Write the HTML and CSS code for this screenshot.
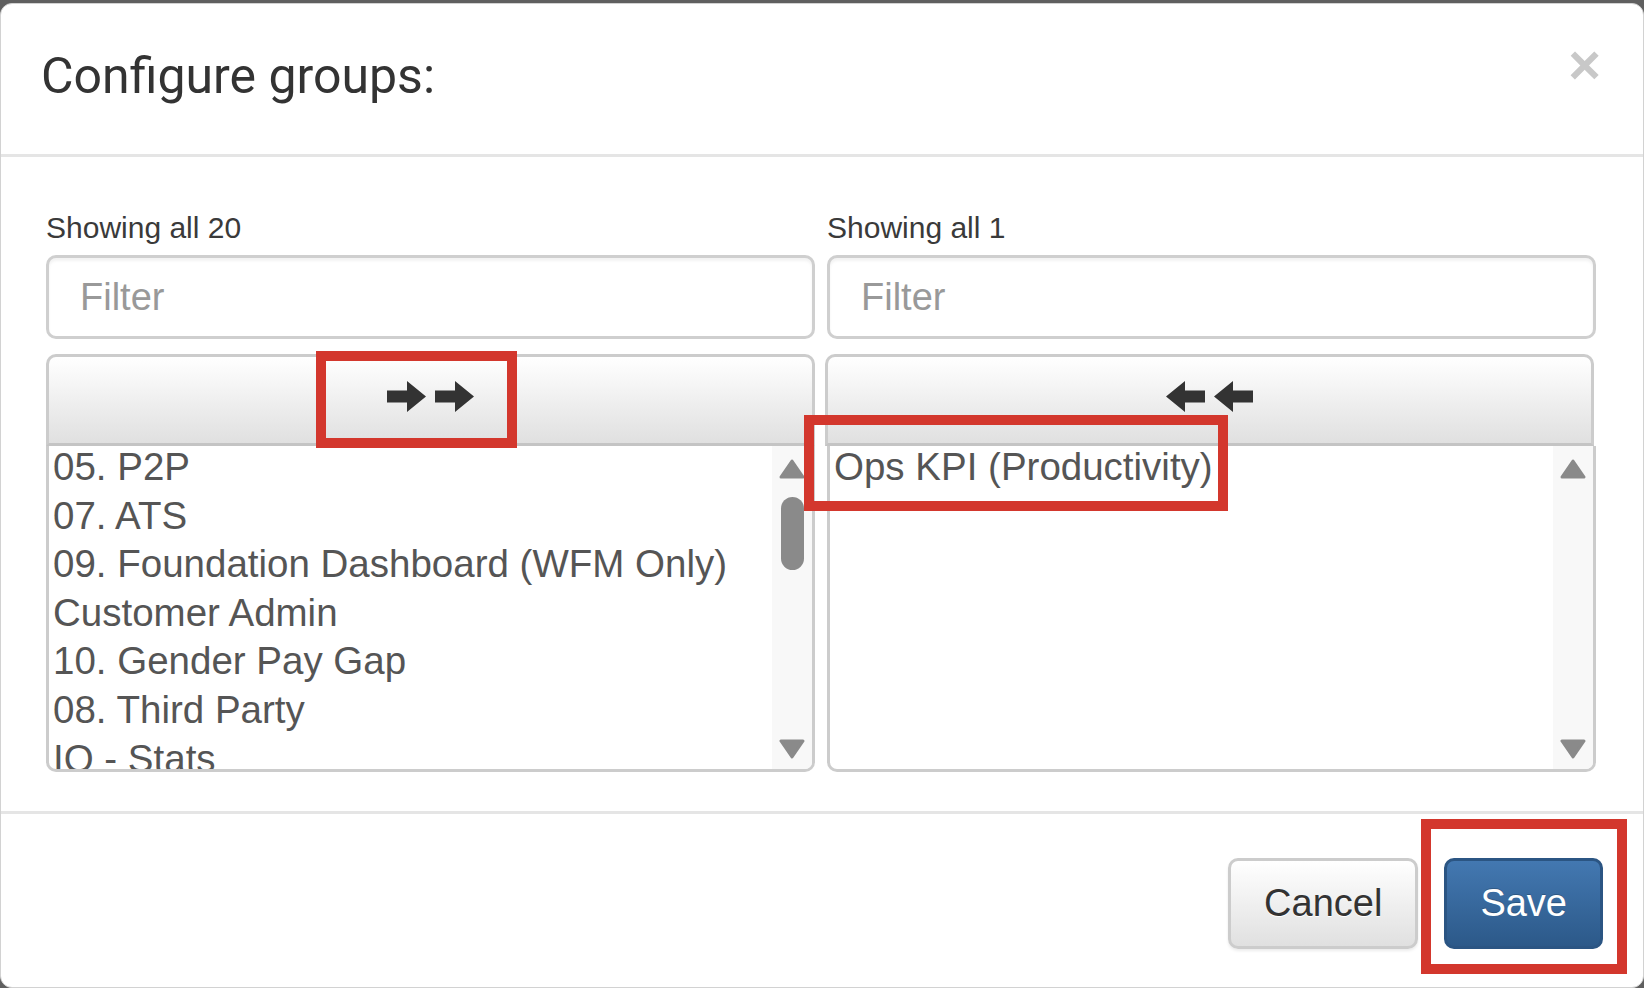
FILE: index.html
```html
<!DOCTYPE html>
<html lang="en">
<head>
<meta charset="utf-8">
<title>Configure groups</title>
<link rel="stylesheet" href="styles.css">
</head>
<body>
<div class="modal">
  <div class="modal-header">
    <h4 class="modal-title">Configure groups:</h4>
    <button class="close" type="button" aria-label="Close">&times;</button>
  </div>

  <div class="modal-body">
    <div class="duallist">
      <!-- available groups -->
      <div class="box">
        <span class="info">Showing all 20</span>
        <input class="filter" type="text" placeholder="Filter">
        <button class="move-all" type="button" title="Move all">
          <svg class="arrow-icon" width="87" height="31" viewBox="0 0 87 31">
            <path d="M0 9.5H20V0L39 15.5L20 31V21.5H0Z"/>
            <path d="M48 9.5H68V0L87 15.5L68 31V21.5H48Z"/>
          </svg>
        </button>
        <div class="list">
          <ul class="options">
            <li>05. P2P</li>
            <li>07. ATS</li>
            <li>09. Foundation Dashboard (WFM Only)</li>
            <li>Customer Admin</li>
            <li>10. Gender Pay Gap</li>
            <li>08. Third Party</li>
            <li>IQ - Stats</li>
          </ul>
          <div class="scrollbar">
            <svg class="sb-arrow" width="26" height="20" viewBox="0 0 26 20"><path d="M13 2L24 18H2Z"/></svg>
            <span class="thumb"></span>
            <span class="track"></span>
            <svg class="sb-arrow" width="26" height="20" viewBox="0 0 26 20"><path d="M2 2H24L13 18Z"/></svg>
          </div>
        </div>
      </div>

      <!-- selected groups -->
      <div class="box">
        <span class="info">Showing all 1</span>
        <input class="filter" type="text" placeholder="Filter">
        <button class="move-all shift" type="button" title="Remove all">
          <svg class="arrow-icon" width="87" height="31" viewBox="0 0 87 31">
            <path d="M39 9.5H19V0L0 15.5L19 31V21.5H39Z"/>
            <path d="M87 9.5H67V0L48 15.5L67 31V21.5H87Z"/>
          </svg>
        </button>
        <div class="list">
          <ul class="options">
            <li>Ops KPI (Productivity)</li>
          </ul>
          <div class="scrollbar">
            <svg class="sb-arrow" width="26" height="20" viewBox="0 0 26 20"><path d="M13 2L24 18H2Z"/></svg>
            <span class="track"></span>
            <svg class="sb-arrow" width="26" height="20" viewBox="0 0 26 20"><path d="M2 2H24L13 18Z"/></svg>
          </div>
        </div>
      </div>
    </div>
  </div>

  <div class="modal-footer">
    <button class="btn btn-default" type="button">Cancel</button>
    <button class="btn btn-primary" type="button">Save</button>
  </div>

  <!-- highlight frames -->
  <span class="mark mark-move"></span>
  <span class="mark mark-item"></span>
  <span class="mark mark-save"></span>
</div>
</body>
</html>
```

FILE: styles.css
```css
* {
  box-sizing: border-box;
}

html, body {
  margin: 0;
  height: 100%;
}

body {
  background: #5f5f5f;
  font-family: "Liberation Sans", Arial, sans-serif;
  color: #333;
  overflow: hidden;
}

.modal {
  position: relative;
  margin-top: 3px;
  height: 985px;
  background: #fff;
  border: 1px solid #d2d2d2;
  border-radius: 12px;
  overflow: hidden;
}

/* header */
.modal-header {
  display: flex;
  justify-content: space-between;
  align-items: flex-start;
  padding: 37px 42px 43px 40px;
  border-bottom: 3px solid #e5e5e5;
}

.modal-title {
  margin: 0;
  font-family: Roboto, "Liberation Sans", sans-serif;
  font-weight: 400;
  font-size: 50px;
  line-height: 70px;
  color: #333;
}

.close {
  margin-top: -4px;
  padding: 0;
  border: 0;
  background: none;
  font-family: "Liberation Sans", Arial, sans-serif;
  font-weight: 700;
  font-size: 56px;
  line-height: 1;
  color: #c8c8c8;
}

/* body */
.modal-body {
  padding: 50px 47px 39px 45px;
}

.duallist {
  display: grid;
  grid-template-columns: 1fr 1fr;
  column-gap: 12px;
}

.box {
  display: flex;
  flex-direction: column;
  min-width: 0;
}

.info {
  font-size: 30px;
  line-height: 41px;
  color: #3a3a3a;
}

.filter {
  margin-top: 7px;
  width: 100%;
  height: 84px;
  padding: 0 31px;
  border: 3px solid #cfcfcf;
  border-radius: 10px;
  box-shadow: inset 0 3px 3px rgba(0, 0, 0, .05);
  font-family: "Liberation Sans", Arial, sans-serif;
  font-size: 38px;
  color: #555;
  outline: none;
}

.filter::placeholder {
  color: #999;
}

.move-all {
  margin-top: 15px;
  width: 100%;
  height: 92px;
  display: flex;
  align-items: center;
  justify-content: center;
  padding: 0 0 7px;
  border: 3px solid #cccccc;
  border-bottom-color: #c4c4c4;
  border-radius: 10px 10px 0 0;
  background: linear-gradient(to bottom, #ffffff 0%, #e0e0e0 100%);
}

.move-all.shift {
  transform: translateX(-2px);
}

.arrow-icon path {
  fill: #333;
}

.list {
  display: flex;
  height: 326px;
  border: 3px solid #cccccc;
  border-top: 0;
  border-radius: 0 0 10px 10px;
  overflow: hidden;
  background: #fff;
}

.options {
  flex: 1;
  min-width: 0;
  margin: 0;
  padding: 0 0 0 4px;
  list-style: none;
  overflow: hidden;
}

.options li {
  font-size: 38.5px;
  line-height: 42px;
  padding-bottom: 6.6px;
  color: #555;
  white-space: nowrap;
}

.scrollbar {
  width: 40px;
  flex: none;
  display: flex;
  flex-direction: column;
  align-items: center;
  background: #f8f8f8;
  padding: 13px 0 10px;
}

.sb-arrow path {
  fill: #8a8a8a;
  stroke: #8a8a8a;
  stroke-width: 3;
  stroke-linejoin: round;
}

.thumb {
  margin-top: 18px;
  width: 23px;
  height: 73px;
  border-radius: 12px;
  background: #8a8a8a;
}

.track {
  flex: 1;
}

/* footer */
.modal-footer {
  display: flex;
  justify-content: flex-end;
  gap: 26px;
  padding: 44px 40px 0 0;
  border-top: 3px solid #e5e5e5;
}

.btn {
  height: 91px;
  display: inline-flex;
  align-items: center;
  padding: 0 33px;
  border: 3px solid transparent;
  border-radius: 10px;
  font-family: "Liberation Sans", Arial, sans-serif;
  font-size: 38px;
}

.btn-default {
  color: #333;
  border-color: #cccccc;
  background: linear-gradient(to bottom, #ffffff 0%, #e0e0e0 100%);
  text-shadow: 0 1px 0 #fff;
  box-shadow: 0 2px 3px rgba(0, 0, 0, .08);
}

.btn-primary {
  padding: 0 33px;
  color: #fff;
  border-color: #2b5583;
  background: linear-gradient(to bottom, #4378b1 0%, #2c5989 100%);
  text-shadow: 0 -1px 0 rgba(0, 0, 0, .2);
}

/* highlight frames drawn over the dialog */
.mark {
  position: absolute;
  border: 10px solid #d3372d;
  pointer-events: none;
}

.mark-move {
  left: 315px;
  top: 347px;
  width: 201px;
  height: 97px;
}

.mark-item {
  left: 803px;
  top: 411px;
  width: 424px;
  height: 96px;
}

.mark-save {
  left: 1420px;
  top: 815px;
  width: 206px;
  height: 155px;
}
```
